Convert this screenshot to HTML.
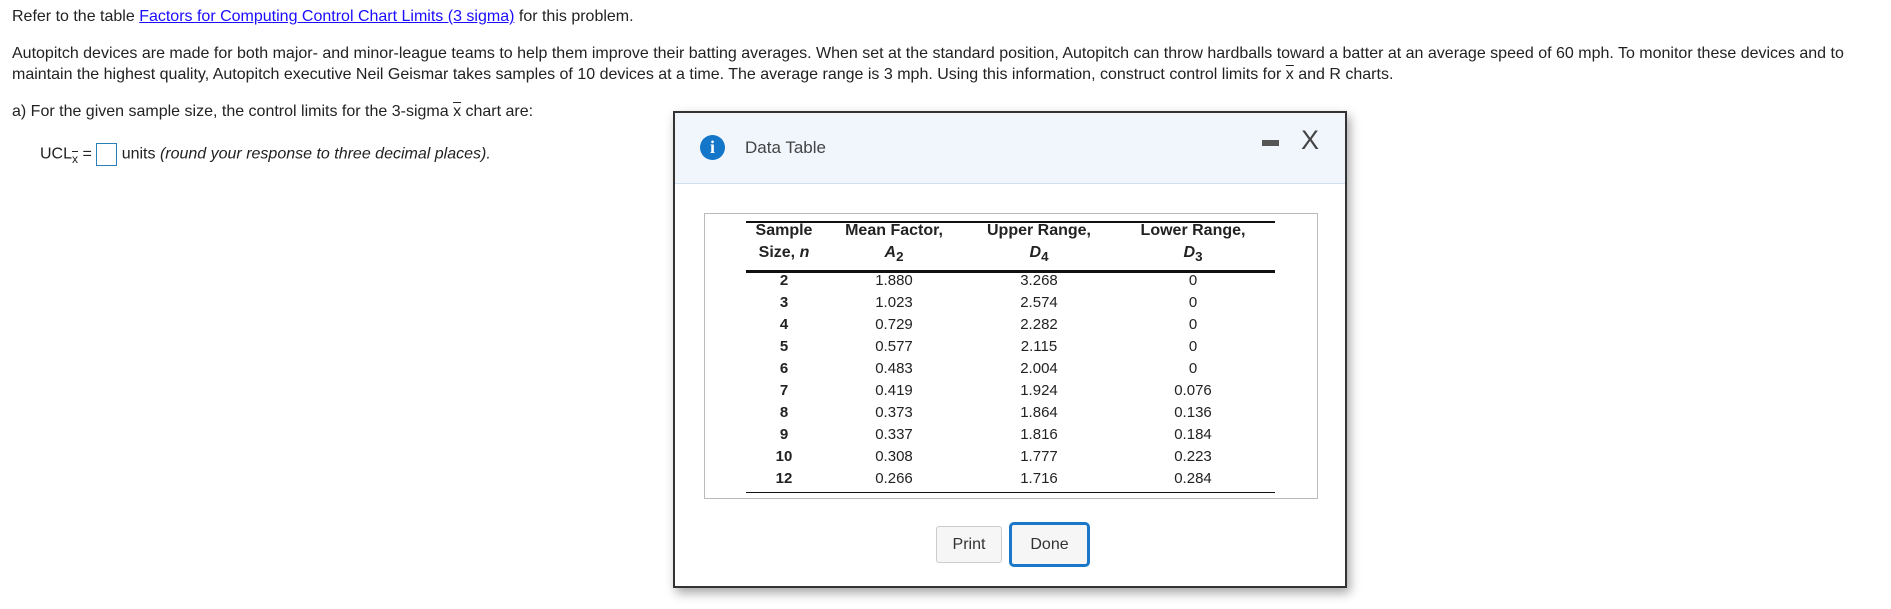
<!DOCTYPE html>
<html><head><meta charset="utf-8"><style>
body{margin:0;width:1891px;height:609px;background:#fff;font-family:"Liberation Sans",Arial,sans-serif;color:#222;position:relative;overflow:hidden;font-size:16px}
.t{position:absolute;white-space:nowrap;line-height:20px}
a{color:#1a0dff;text-decoration:underline}
.ov{text-decoration:overline}
#dlg{position:absolute;left:673px;top:111px;width:670px;height:473px;border:2px solid #333;background:#fff;box-shadow:3px 5px 10px rgba(0,0,0,.35)}
#hd{position:absolute;left:0;top:0;right:0;height:70px;background:#f1f6fd;border-bottom:1px solid #cfe0f0}
#tb{position:absolute;left:29px;top:100px;width:612px;height:284px;border:1px solid #bbb}
.c{position:absolute;text-align:center;width:160px;font-size:15px;line-height:22px}
.h{font-weight:bold}
.btn{position:absolute;border:1px solid #ccc;background:#f6f6f6;border-radius:3px;text-align:center;font-size:16px;color:#333}
</style></head><body>
<div class="t" style="left:12px;top:7px">Refer to the table <a>Factors for Computing Control Chart Limits (3 sigma)</a> for this problem.</div>
<div class="t" style="left:12px;top:44px">Autopitch devices are made for both major- and minor-league teams to help them improve their batting averages. When set at the standard position, Autopitch can throw hardballs toward a batter at an average speed of 60 mph. To monitor these devices and to</div>
<div class="t" style="left:12px;top:65px">maintain the highest quality, Autopitch executive Neil Geismar takes samples of 10 devices at a time. The average range is 3 mph. Using this information, construct control limits for <span class="ov">x</span> and R charts.</div>
<div class="t" style="left:12px;top:102px">a) For the given sample size, the control limits for the 3-sigma <span class="ov">x</span> chart are:</div>
<div class="t" style="left:40px;top:143px">UCL<sub class="ov" style="font-size:12px">x</sub> = <span style="display:inline-block;width:19px;height:21px;border:1px solid #2a7fb8;vertical-align:middle"></span> units <i>(round your response to three decimal places).</i></div>
<div id="dlg">
<div id="hd">
<div style="position:absolute;left:25px;top:22px;width:25px;height:25px;border-radius:50%;background:#1476c8;color:#fff;font-family:'Liberation Serif',serif;font-weight:bold;font-size:18px;text-align:center;line-height:25px">i</div>
<div class="t" style="left:70px;top:25px;color:#444;font-size:17px">Data Table</div>
<div style="position:absolute;left:587px;top:27px;width:17px;height:6px;background:#555"></div>
<div class="t" style="left:626px;top:12px;font-size:27px;line-height:30px;color:#444">X</div>
</div>
<div id="tb">
<div style="position:absolute;left:41px;top:7px;width:529px;border-top:2px solid #111"></div>
<div style="position:absolute;left:41px;top:56px;width:529px;border-top:3px solid #111"></div>
<div style="position:absolute;left:41px;top:278px;width:529px;border-top:1px solid #111"></div>
</div>
<div class="c h" style="left:29px;top:107px;font-size:16px">Sample<br>Size, <i>n</i></div>
<div class="c h" style="left:139px;top:107px;font-size:16px">Mean Factor,<br><i>A</i><sub>2</sub></div>
<div class="c h" style="left:284px;top:107px;font-size:16px">Upper Range,<br><i>D</i><sub>4</sub></div>
<div class="c h" style="left:438px;top:107px;font-size:16px">Lower Range,<br><i>D</i><sub>3</sub></div>
<div class="c h" style="left:29px;top:157px">2<br>3<br>4<br>5<br>6<br>7<br>8<br>9<br>10<br>12</div>
<div class="c" style="left:139px;top:157px">1.880<br>1.023<br>0.729<br>0.577<br>0.483<br>0.419<br>0.373<br>0.337<br>0.308<br>0.266</div>
<div class="c" style="left:284px;top:157px">3.268<br>2.574<br>2.282<br>2.115<br>2.004<br>1.924<br>1.864<br>1.816<br>1.777<br>1.716</div>
<div class="c" style="left:438px;top:157px">0<br>0<br>0<br>0<br>0<br>0.076<br>0.136<br>0.184<br>0.223<br>0.284</div>
<div class="btn" style="left:261px;top:413px;width:64px;height:35px;line-height:35px">Print</div>
<div class="btn" style="left:334px;top:409px;width:75px;height:39px;line-height:39px;border:3px solid #1a78c8;border-radius:5px">Done</div>
</div>
</body></html>
